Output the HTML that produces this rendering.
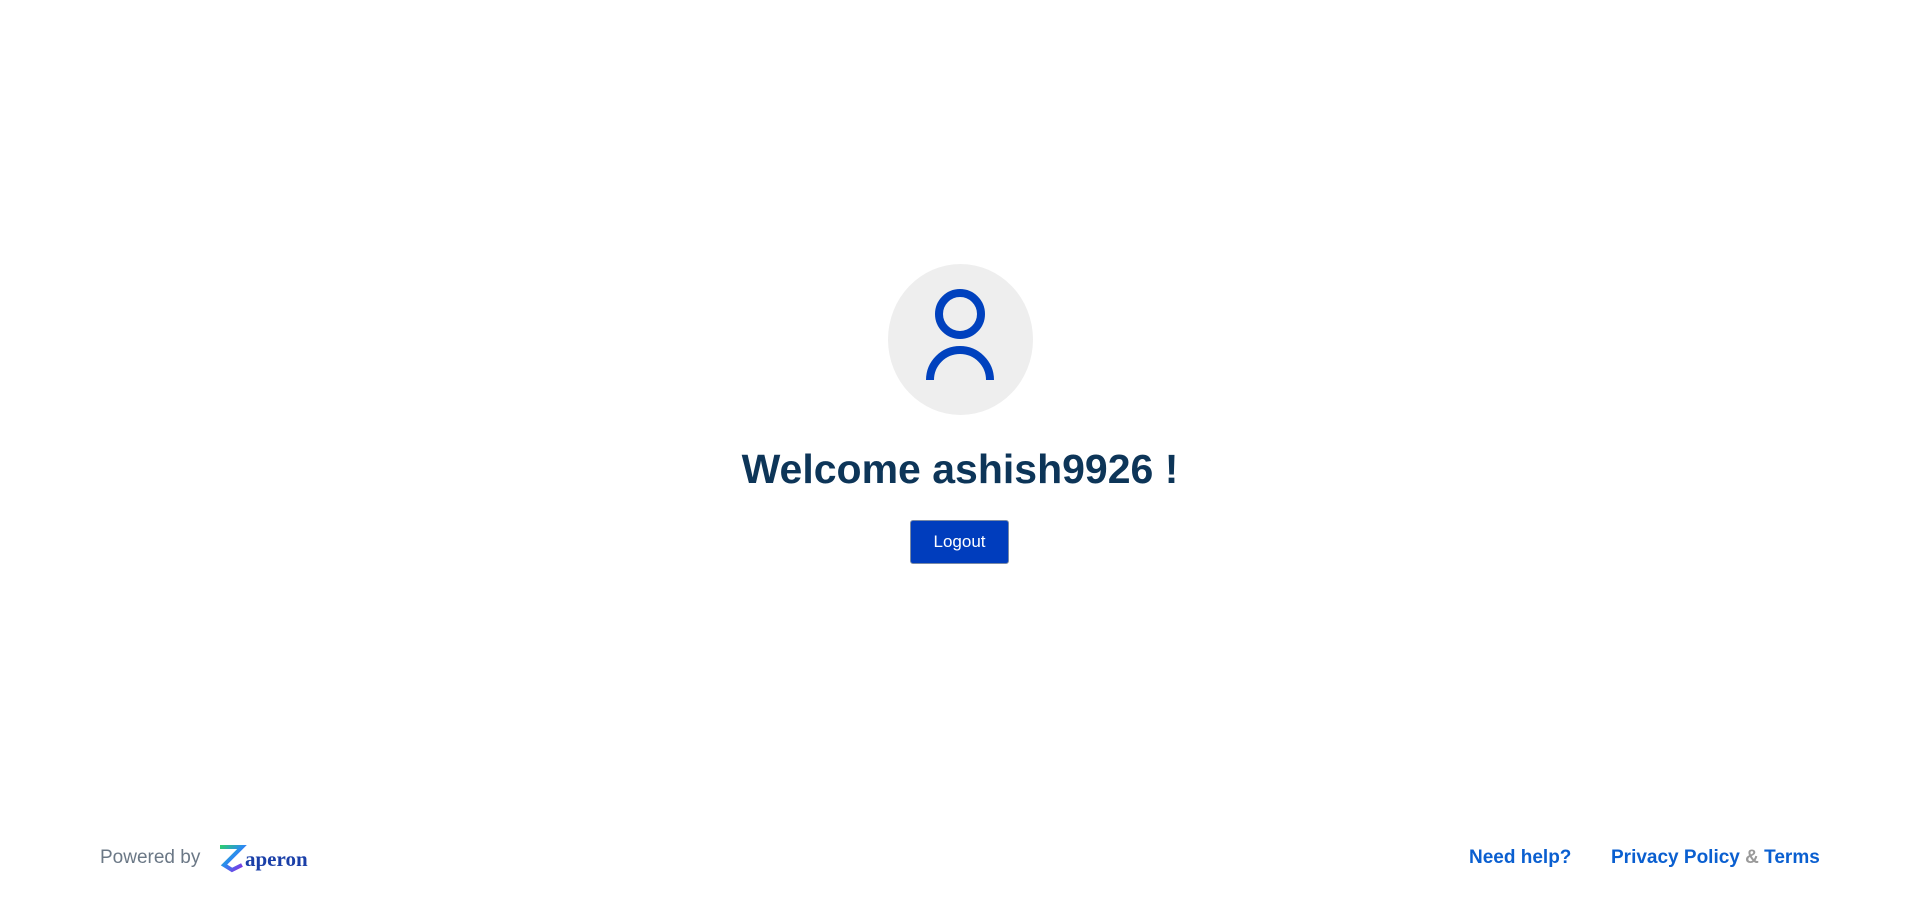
<!DOCTYPE html>
<html><head><meta charset="utf-8"><style>
html,body{margin:0;padding:0;width:1920px;height:918px;background:#fff;overflow:hidden;font-family:"Liberation Sans",sans-serif;}
.avatar{position:absolute;left:888px;top:264px;width:145px;height:151px;border-radius:50%;background:#eeeeee;}
h1{position:absolute;left:0;width:1920px;top:443px;margin:0;text-align:center;font-size:41px;font-weight:bold;color:#0d3558;line-height:52px;}
.btn{position:absolute;left:910px;top:520px;width:97px;height:42px;background:#003dbd;border:1px solid #7a8aa5;border-radius:3px;color:#fff;font-size:17px;line-height:42px;text-align:center;}
.pw{position:absolute;left:100px;top:847px;font-size:19px;color:#6b7886;}
.logo{position:absolute;left:218px;top:843px;}
.links{position:absolute;top:847px;font-size:19px;font-weight:bold;color:#0a5fd0;}
</style></head><body>
<div class="avatar"></div>
<svg style="position:absolute;left:0;top:0" width="1920" height="918">
<circle cx="960" cy="314" r="21" fill="none" stroke="#0041be" stroke-width="8"/>
<path d="M930 380 A30 30 0 0 1 990 380" fill="none" stroke="#0041be" stroke-width="8"/>
</svg>
<h1>Welcome ashish9926 !</h1>
<div class="btn">Logout</div>
<div class="pw">Powered by</div>
<svg class="logo" width="100" height="30">
<defs><linearGradient id="g" x1="0" y1="0" x2="1" y2="1"><stop offset="0" stop-color="#2ecc71"/><stop offset=".5" stop-color="#2a8cf0"/><stop offset="1" stop-color="#8a2be2"/></linearGradient></defs>
<path d="M2 4 H24 L6 22 L14 27 L24 22" fill="none" stroke="url(#g)" stroke-width="4"/>
<text x="27" y="23" font-family="Liberation Serif,serif" font-weight="bold" font-size="21" fill="#1a3fa8">aperon</text>
</svg>
<div class="links" style="left:1469px">Need help?</div>
<div class="links" style="left:1611px">Privacy Policy <span style="color:#9a9a9a">&amp;</span> Terms</div>
</body></html>
